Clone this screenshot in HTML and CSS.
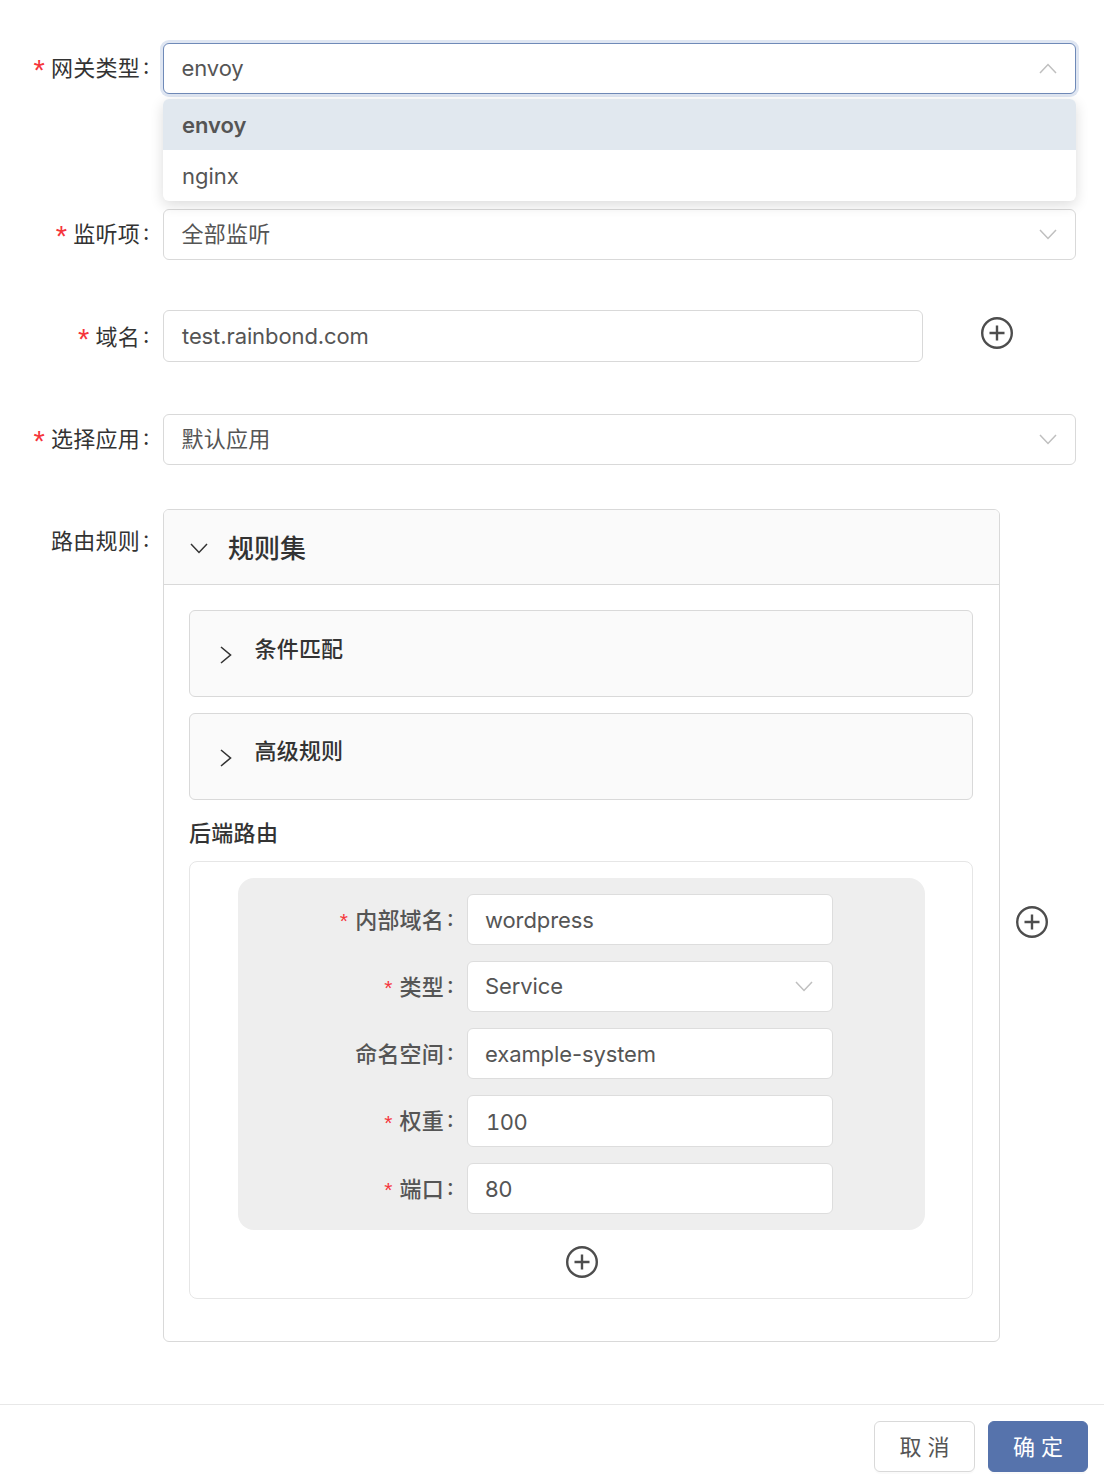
FILE: index.html
```html
<!DOCTYPE html>
<html lang="zh-CN">
<head>
<meta charset="utf-8">
<title>网关</title>
<link rel="stylesheet" href="styles.css">
</head>
<body>
<svg class="defs" width="0" height="0" aria-hidden="true">
  <symbol id="plus" viewBox="0 0 32 32"><circle cx="16" cy="16" r="14.800" fill="none" stroke="currentColor" stroke-width="2.400"/><path d="M16 8.500v15M8.500 16h15" fill="none" stroke="currentColor" stroke-width="2.400"/></symbol>
  <symbol id="down" viewBox="0 0 18 11"><path d="M1 1l8 8.500 8-8.500" fill="none" stroke="currentColor" stroke-width="1.500"/></symbol>
  <symbol id="up" viewBox="0 0 18 11"><path d="M1 10l8-8.500 8 8.500" fill="none" stroke="currentColor" stroke-width="1.500"/></symbol>
  <symbol id="right" viewBox="0 0 12 18"><path d="M1 1l9.500 8-9.500 8" fill="none" stroke="currentColor" stroke-width="1.600"/></symbol>
</svg>
<main class="form">
  <div class="row row-gateway">
    <label class="label"><span class="req">*</span>网关类型<span class="colon">:</span></label>
    <div class="control select focused">
      <span class="value">envoy</span><svg class="arrow"><use href="#up"/></svg>
      <ul class="dropdown">
        <li class="option active">envoy</li>
        <li class="option">nginx</li>
      </ul>
    </div>
  </div>
  <div class="row row-listen">
    <label class="label"><span class="req">*</span>监听项<span class="colon">:</span></label>
    <div class="control select cjk"><span class="value">全部监听</span><svg class="arrow"><use href="#down"/></svg></div>
  </div>
  <div class="row row-domain">
    <label class="label label-domain"><span class="req">*</span>域名<span class="colon">:</span></label>
    <div class="control input domain"><span class="value">test.rainbond.com</span></div>
    <svg class="plus plus-domain"><use href="#plus"/></svg>
  </div>
  <div class="row row-app">
    <label class="label"><span class="req">*</span>选择应用<span class="colon">:</span></label>
    <div class="control select cjk"><span class="value">默认应用</span><svg class="arrow"><use href="#down"/></svg></div>
  </div>
  <div class="row row-rules">
    <label class="label label-rules">路由规则<span class="colon">:</span></label>
    <section class="panel">
      <header class="panel-head"><svg class="head-arrow"><use href="#down"/></svg><h2 class="panel-title">规则集</h2></header>
      <div class="panel-body">
        <div class="sub"><svg class="sub-arrow"><use href="#right"/></svg><span class="sub-title">条件匹配</span></div>
        <div class="sub"><svg class="sub-arrow"><use href="#right"/></svg><span class="sub-title sub-title-adv">高级规则</span></div>
        <h3 class="backend-title">后端路由</h3>
        <div class="backend">
          <div class="gray">
            <div class="irow"><label class="ilabel"><span class="ireq">*</span>内部域名<span class="icolon">:</span></label><div class="control ictl"><span class="value">wordpress</span></div></div>
            <div class="irow"><label class="ilabel"><span class="ireq">*</span>类型<span class="icolon">:</span></label><div class="control ictl select"><span class="value">Service</span><svg class="arrow"><use href="#down"/></svg></div></div>
            <div class="irow"><label class="ilabel">命名空间<span class="icolon">:</span></label><div class="control ictl"><span class="value">example-system</span></div></div>
            <div class="irow irow-w"><label class="ilabel"><span class="ireq">*</span>权重<span class="icolon">:</span></label><div class="control ictl tall"><span class="value num">100</span></div></div>
            <div class="irow"><label class="ilabel"><span class="ireq">*</span>端口<span class="icolon">:</span></label><div class="control ictl"><span class="value">80</span></div></div>
          </div>
          <svg class="plus plus-backend"><use href="#plus"/></svg>
        </div>
      </div>
    </section>
    <svg class="plus plus-rule"><use href="#plus"/></svg>
  </div>
</main>
<footer class="footer">
  <button class="btn">取 消</button>
  <button class="btn primary">确 定</button>
</footer>
</body>
</html>
```
FILE: styles.css
```css
* { box-sizing: border-box; }
html, body { margin: 0; padding: 0; }
body {
  width: 1104px;
  height: 1476px;
  background: #fff;
  color: #555;
  font-family: Inter, "Noto Sans CJK SC", sans-serif;
  font-size: 22px;
  display: flex;
  flex-direction: column;
  overflow: hidden;
}
.defs { position: absolute; }
.form { flex: 1; padding: 43px 28px 0 0; }
.row { display: flex; align-items: flex-start; }
.row-listen { margin-top: 115px; }
.row-domain { margin-top: 50px; }
.row-app { margin-top: 49px; }
.row-rules { margin-top: 44px; }
.label {
  width: 163px;
  flex: none;
  height: 51px;
  padding: 0 12px 6px 0;
  display: flex;
  justify-content: flex-end;
  align-items: center;
  color: #333;
  white-space: nowrap;
  letter-spacing: .25px;
}
.label-rules { height: 66px; }
.label-domain { height: 55px; }
.req {
  color: #f5353b;
  margin: 9px 6px 0 0;
  font-family: "Liberation Sans", sans-serif;
  font-size: 29px;
  line-height: 28px;
}
.colon { margin-left: 3px; width: 8px; text-align: left; }
.control {
  position: relative;
  flex: 1;
  height: 51px;
  border: 1px solid #d9d9d9;
  border-radius: 6px;
  background: #fff;
  display: flex;
  align-items: center;
  padding: 0 18px 0 17.500px;
  color: #555;
}
.select { padding-bottom: 2px; }
.cjk { padding-bottom: 5px; }
.cjk .value { letter-spacing: .25px; }
.domain { flex: none; width: 760px; height: 52px; padding-left: 18px; }
.focused { border-color: #6f8ab8; box-shadow: 0 0 0 3px #dfe6f2; }
.value { flex: 1; white-space: nowrap; letter-spacing: -.1px; }
.arrow { width: 18px; height: 11px; color: #bfbfbf; flex: none; }
.select .arrow { margin-top: 2px; }
.cjk .arrow { margin-top: 5px; }
.dropdown {
  position: absolute;
  z-index: 2;
  left: -1px;
  right: -1px;
  top: 55px;
  margin: 0;
  padding: 0;
  list-style: none;
  background: #fff;
  border-radius: 6px;
  overflow: hidden;
  box-shadow: 0 4px 14px rgba(0, 0, 0, .14);
}
.option { height: 51px; line-height: 53px; padding: 0 19px; }
.active { background: #e1e8ef; font-weight: 600; }
.plus { width: 32px; height: 32px; color: #4d4d4d; flex: none; }
.plus-domain { margin: 7px 0 0 58px; }
.plus-rule { margin: 397px 0 0 16px; }
.plus-backend { display: block; margin: 16px auto 0; }
.panel {
  flex: none;
  width: 837px;
  height: 833px;
  border: 1px solid #d9d9d9;
  border-radius: 6px;
  overflow: hidden;
}
.panel-head {
  height: 75px;
  background: #fafafa;
  border-bottom: 1px solid #d9d9d9;
  display: flex;
  align-items: center;
  padding-left: 26px;
  color: #333;
}
.head-arrow { width: 18px; height: 11px; color: #333; margin-top: 2px; }
.panel-title { margin: 3px 0 0 20px; font-size: 26px; font-weight: 500; color: #333; line-height: 1; }
.panel-body { padding: 25px 26px 0 25px; }
.sub {
  height: 87px;
  background: #fafafa;
  border: 1px solid #d9d9d9;
  border-radius: 6px;
  display: flex;
  align-items: flex-start;
  padding-left: 30px;
  margin-bottom: 16px;
}
.sub-arrow { width: 12px; height: 18px; color: #333; margin-top: 35px; }
.sub-title { margin: 22px 0 0 22.500px; font-weight: 500; color: #333; line-height: 32px; letter-spacing: .2px; }
.sub-title-adv { margin-top: 21px; }
.backend-title { margin: 16px 0 0; font-size: 22px; font-weight: 500; color: #333; line-height: 34px; height: 45px; letter-spacing: .3px; }
.backend {
  height: 438px;
  border: 1px solid #e6e6e6;
  border-radius: 8px;
  padding: 16px 47px 0 48px;
}
.gray {
  height: 352px;
  background: #eee;
  border-radius: 16px;
  padding: 16px 92px 0 0;
}
.irow { display: flex; margin-bottom: 16px; }
.ilabel {
  width: 229px;
  flex: none;
  padding: 0 14px 4px 0;
  display: flex;
  justify-content: flex-end;
  align-items: center;
  font-weight: 500;
  color: #555;
  white-space: nowrap;
  letter-spacing: .2px;
}
.ireq {
  color: #f5353b;
  margin: 6px 7px 0 0;
  font-family: "Liberation Sans", sans-serif;
  font-weight: 400;
  font-size: 21px;
  line-height: 21px;
}
.icolon { margin-left: 3px; width: 6px; }
.ictl { flex: 1; border-color: #ddd; padding-left: 17px; padding-right: 19px; }
.tall { height: 52px; }
.num { padding-left: 1px; padding-top: 1px; font-variant-numeric: tabular-nums; letter-spacing: -.5px; }
.footer {
  height: 72px;
  border-top: 1px solid #e8e8e8;
  padding: 16px 16px 0 0;
  display: flex;
  justify-content: flex-end;
  gap: 13px;
}
.btn {
  width: 101px;
  height: 51px;
  padding: 0 0 4px;
  background: #fff;
  border: 1px solid #d9d9d9;
  border-radius: 6px;
  color: #555;
  font: inherit;
  box-shadow: 0 2px 0 rgba(0, 0, 0, .02);
}
.primary { width: 100px; background: #5673ac; border-color: #5673ac; color: #fff; }
```
